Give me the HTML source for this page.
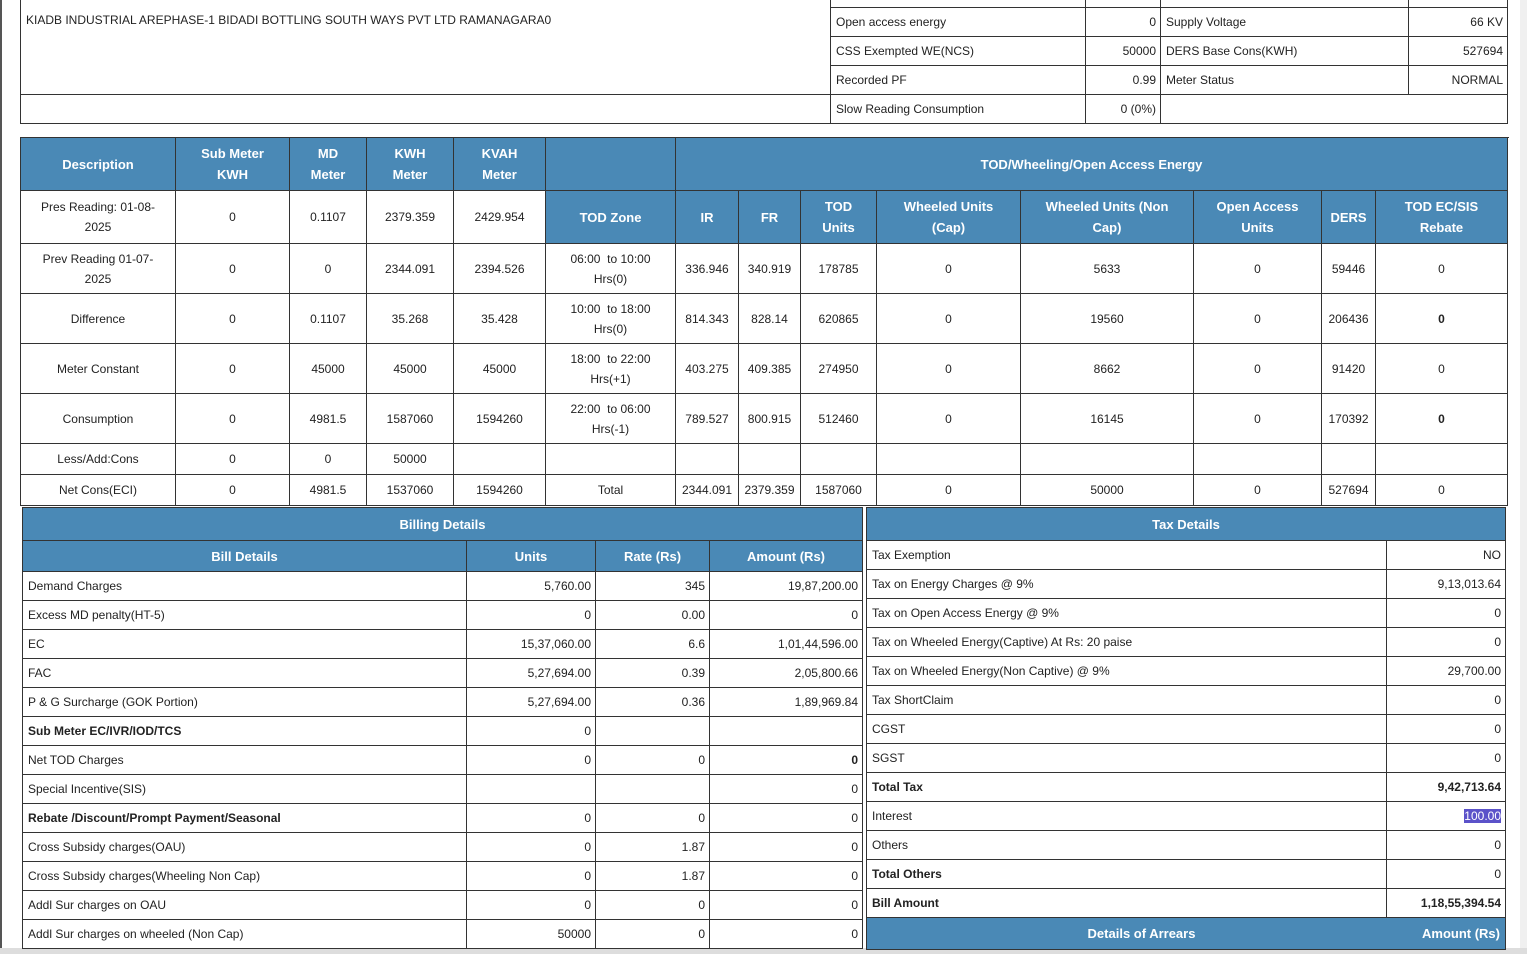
<!DOCTYPE html>
<html><head><meta charset="utf-8"><style>
*{box-sizing:border-box;margin:0;padding:0}
body{width:1527px;height:954px;background:#fff;position:relative;overflow:hidden;font-family:"Liberation Sans",Arial,sans-serif;font-size:12px;color:#222}
table{border-collapse:collapse;table-layout:fixed;position:absolute}
td,th{border:1px solid #333;overflow:hidden;white-space:nowrap}
th{background:#4a89b6;color:#fff;font-weight:bold;font-size:13px;text-align:center;line-height:21px}
.m td{text-align:center;line-height:20px}
.r{text-align:right;padding-right:4px}
.l{text-align:left;padding-left:5px}
.b{font-weight:bold}
.w{white-space:normal}
</style></head><body>
<div style="position:absolute;left:0;top:0;width:2px;height:954px;background:#555"></div>
<div style="position:absolute;left:0;top:948px;width:1527px;height:6px;background:#ddd"></div>
<div style="position:absolute;left:1520px;top:0;width:7px;height:948px;background:#f0f0f0"></div>

<div style="position:absolute;left:20px;top:-2px;width:811px;height:97px;border:1px solid #333;border-top:none"></div>
<div style="position:absolute;left:26px;top:13px;font-size:12px">KIADB INDUSTRIAL AREPHASE-1 BIDADI BOTTLING SOUTH WAYS PVT LTD RAMANAGARA0</div>
<div style="position:absolute;left:20px;top:94px;width:811px;height:30px;border:1px solid #333"></div>
<table style="left:830px;top:-22px;width:677px">
<colgroup><col style="width:255px"><col style="width:75px"><col style="width:248px"><col style="width:99px"></colgroup>
<tr style="height:29px"><td></td><td></td><td></td><td></td></tr>
<tr style="height:29px"><td class="l">Open access energy</td><td class="r">0</td><td class="l">Supply Voltage</td><td class="r">66 KV</td></tr>
<tr style="height:29px"><td class="l">CSS Exempted WE(NCS)</td><td class="r">50000</td><td class="l">DERS Base Cons(KWH)</td><td class="r">527694</td></tr>
<tr style="height:29px"><td class="l">Recorded PF</td><td class="r">0.99</td><td class="l">Meter Status</td><td class="r">NORMAL</td></tr>
<tr style="height:29px"><td class="l">Slow Reading Consumption</td><td class="r">0 (0%)</td><td colspan="2"></td></tr>
</table>

<table class="m" style="left:20px;top:137px;width:1487px">
<colgroup><col style="width:155px"><col style="width:114px"><col style="width:77px"><col style="width:87px"><col style="width:92px"><col style="width:130px"><col style="width:63px"><col style="width:62px"><col style="width:76px"><col style="width:144px"><col style="width:173px"><col style="width:128px"><col style="width:54px"><col style="width:132px"></colgroup>
<tr style="height:53px"><th>Description</th><th>Sub Meter<br>KWH</th><th>MD<br>Meter</th><th>KWH<br>Meter</th><th>KVAH<br>Meter</th><th></th><th colspan="9">TOD/Wheeling/Open Access Energy</th></tr>
<tr style="height:53px"><td class="w">Pres Reading: 01-08-<br>2025</td><td>0</td><td>0.1107</td><td>2379.359</td><td>2429.954</td><th>TOD Zone</th><th>IR</th><th>FR</th><th>TOD<br>Units</th><th>Wheeled Units<br>(Cap)</th><th>Wheeled Units (Non<br>Cap)</th><th>Open Access<br>Units</th><th>DERS</th><th>TOD EC/SIS<br>Rebate</th></tr>
<tr style="height:50px"><td>Prev Reading 01-07-<br>2025</td><td>0</td><td>0</td><td>2344.091</td><td>2394.526</td><td>06:00 &nbsp;to 10:00<br>Hrs(0)</td><td>336.946</td><td>340.919</td><td>178785</td><td>0</td><td>5633</td><td>0</td><td>59446</td><td>0</td></tr>
<tr style="height:50px"><td>Difference</td><td>0</td><td>0.1107</td><td>35.268</td><td>35.428</td><td>10:00 &nbsp;to 18:00<br>Hrs(0)</td><td>814.343</td><td>828.14</td><td>620865</td><td>0</td><td>19560</td><td>0</td><td>206436</td><td class="b">0</td></tr>
<tr style="height:50px"><td>Meter Constant</td><td>0</td><td>45000</td><td>45000</td><td>45000</td><td>18:00 &nbsp;to 22:00<br>Hrs(+1)</td><td>403.275</td><td>409.385</td><td>274950</td><td>0</td><td>8662</td><td>0</td><td>91420</td><td>0</td></tr>
<tr style="height:50px"><td>Consumption</td><td>0</td><td>4981.5</td><td>1587060</td><td>1594260</td><td>22:00 &nbsp;to 06:00<br>Hrs(-1)</td><td>789.527</td><td>800.915</td><td>512460</td><td>0</td><td>16145</td><td>0</td><td>170392</td><td class="b">0</td></tr>
<tr style="height:31px"><td>Less/Add:Cons</td><td>0</td><td>0</td><td>50000</td><td></td><td></td><td></td><td></td><td></td><td></td><td></td><td></td><td></td><td></td></tr>
<tr style="height:31px"><td>Net Cons(ECI)</td><td>0</td><td>4981.5</td><td>1537060</td><td>1594260</td><td>Total</td><td>2344.091</td><td>2379.359</td><td>1587060</td><td>0</td><td>50000</td><td>0</td><td>527694</td><td>0</td></tr>
</table>

<table style="left:22px;top:507px;width:840px">
<colgroup><col style="width:444px"><col style="width:129px"><col style="width:114px"><col style="width:153px"></colgroup>
<tr style="height:33px"><th colspan="4">Billing Details</th></tr>
<tr style="height:31px"><th>Bill Details</th><th>Units</th><th>Rate (Rs)</th><th>Amount (Rs)</th></tr>
<tr style="height:29px"><td class="l">Demand Charges</td><td class="r">5,760.00</td><td class="r">345</td><td class="r">19,87,200.00</td></tr>
<tr style="height:29px"><td class="l">Excess MD penalty(HT-5)</td><td class="r">0</td><td class="r">0.00</td><td class="r">0</td></tr>
<tr style="height:29px"><td class="l">EC</td><td class="r">15,37,060.00</td><td class="r">6.6</td><td class="r">1,01,44,596.00</td></tr>
<tr style="height:29px"><td class="l">FAC</td><td class="r">5,27,694.00</td><td class="r">0.39</td><td class="r">2,05,800.66</td></tr>
<tr style="height:29px"><td class="l">P &amp; G Surcharge (GOK Portion)</td><td class="r">5,27,694.00</td><td class="r">0.36</td><td class="r">1,89,969.84</td></tr>
<tr style="height:29px"><td class="l b">Sub Meter EC/IVR/IOD/TCS</td><td class="r">0</td><td></td><td></td></tr>
<tr style="height:29px"><td class="l">Net TOD Charges</td><td class="r">0</td><td class="r">0</td><td class="r b">0</td></tr>
<tr style="height:29px"><td class="l">Special Incentive(SIS)</td><td></td><td></td><td class="r">0</td></tr>
<tr style="height:29px"><td class="l b">Rebate /Discount/Prompt Payment/Seasonal</td><td class="r">0</td><td class="r">0</td><td class="r">0</td></tr>
<tr style="height:29px"><td class="l">Cross Subsidy charges(OAU)</td><td class="r">0</td><td class="r">1.87</td><td class="r">0</td></tr>
<tr style="height:29px"><td class="l">Cross Subsidy charges(Wheeling Non Cap)</td><td class="r">0</td><td class="r">1.87</td><td class="r">0</td></tr>
<tr style="height:29px"><td class="l">Addl Sur charges on OAU</td><td class="r">0</td><td class="r">0</td><td class="r">0</td></tr>
<tr style="height:29px"><td class="l">Addl Sur charges on wheeled (Non Cap)</td><td class="r">50000</td><td class="r">0</td><td class="r">0</td></tr>
</table>

<table style="left:866px;top:507px;width:639px">
<colgroup><col style="width:520px"><col style="width:119px"></colgroup>
<tr style="height:33px"><th colspan="2">Tax Details</th></tr>
<tr style="height:29px"><td class="l">Tax Exemption</td><td class="r">NO</td></tr>
<tr style="height:29px"><td class="l">Tax on Energy Charges @ 9%</td><td class="r">9,13,013.64</td></tr>
<tr style="height:29px"><td class="l">Tax on Open Access Energy @ 9%</td><td class="r">0</td></tr>
<tr style="height:29px"><td class="l">Tax on Wheeled Energy(Captive) At Rs: 20 paise</td><td class="r">0</td></tr>
<tr style="height:29px"><td class="l">Tax on Wheeled Energy(Non Captive) @ 9%</td><td class="r">29,700.00</td></tr>
<tr style="height:29px"><td class="l">Tax ShortClaim</td><td class="r">0</td></tr>
<tr style="height:29px"><td class="l">CGST</td><td class="r">0</td></tr>
<tr style="height:29px"><td class="l">SGST</td><td class="r">0</td></tr>
<tr style="height:29px"><td class="l b">Total Tax</td><td class="r b">9,42,713.64</td></tr>
<tr style="height:29px"><td class="l">Interest</td><td class="r"><span style="background:#5b52c9;color:#fff">100.00</span></td></tr>
<tr style="height:29px"><td class="l">Others</td><td class="r">0</td></tr>
<tr style="height:29px"><td class="l b">Total Others</td><td class="r">0</td></tr>
<tr style="height:29px"><td class="l b">Bill Amount</td><td class="r b">1,18,55,394.54</td></tr>
<tr style="height:32px"><th style="padding-left:30px;border-right-color:#4a89b6">Details of Arrears</th><th style="text-align:right;padding-right:5px;border-left-color:#4a89b6">Amount (Rs)</th></tr>
</table>
</body></html>
